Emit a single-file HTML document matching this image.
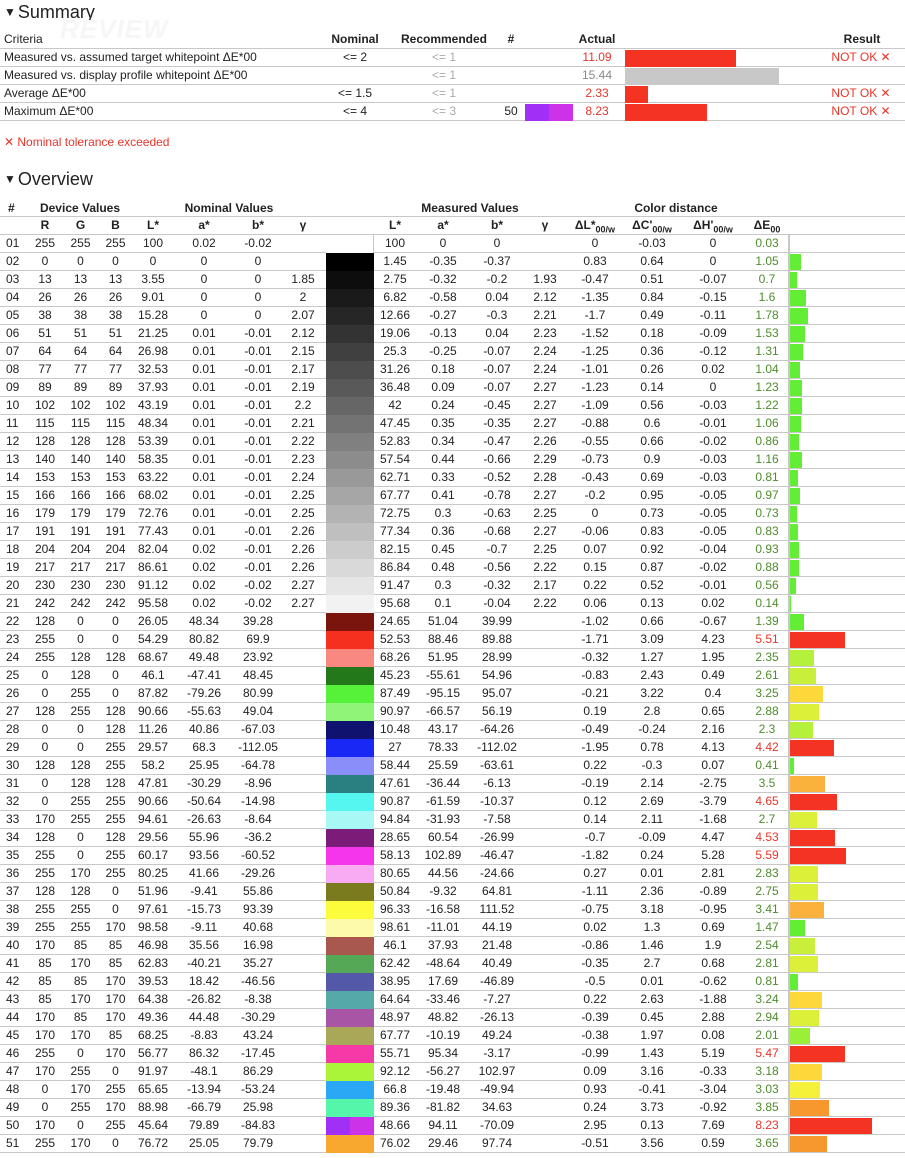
<!DOCTYPE html>
<html><head><meta charset="utf-8"><style>
*{margin:0;padding:0;box-sizing:border-box}
body{width:905px;height:1158px;background:#fff;font-family:"Liberation Sans",Arial,sans-serif;font-size:12px;color:#222;position:relative;overflow:hidden}
.h{position:absolute;left:4px;font-size:18px;color:#222}
.h span{font-size:12px;vertical-align:2px;margin-right:2px}
.a{position:absolute;white-space:nowrap}
.sr{position:absolute;left:0;width:905px;height:18px;border-bottom:1px solid #c8c8c8}
.c{position:absolute;top:0;line-height:17px;text-align:center}
.r{display:flex;height:18px;border-bottom:1px solid #c8c8c8;width:905px}
.r>span{display:block;line-height:17px;text-align:center;white-space:nowrap;flex:none}
.r>span:nth-child(1){width:26px;text-align:left;padding-left:6px}
.r>span:nth-child(2){width:38px}.r>span:nth-child(3){width:33px}.r>span:nth-child(4){width:37px}
.r>span:nth-child(5){width:38px}.r>span:nth-child(6){width:64px}.r>span:nth-child(7){width:44px}
.r>span:nth-child(8){width:46px}.r>span:nth-child(9){width:48px;height:18px;display:flex}
.r>span:nth-child(10){width:42px}.r>span:nth-child(11){width:54px}.r>span:nth-child(12){width:54px}
.r>span:nth-child(13){width:42px}.r>span:nth-child(14){width:58px}.r>span:nth-child(15){width:56px}
.r>span:nth-child(16){width:66px}.r>span:nth-child(17){width:42px;color:#4e8c2c}
.r>span:nth-child(18){width:117px;border-left:2px solid #c8c8c8;height:18px;padding-top:1px;text-align:left}
.r>span:nth-child(9) i{display:block;width:24px;height:18px}
.r>span:nth-child(18) b{display:block;height:16px}
.r>span.red{color:#e8352a}
.hd{font-weight:bold}
sub{font-size:9px;line-height:0}
#tbl{position:absolute;left:0;top:217px}
</style></head><body>
<div class="h" style="top:2px"><span>▼</span>Summary</div>
<div class="a" style="left:60px;top:14px;font-size:26px;font-style:italic;font-weight:bold;color:#f6f6f6;letter-spacing:1px">REVIEW</div>
<div class="sr" style="top:31px"><div class="c" style="left:4px">Criteria</div><div class="c hd" style="left:325px;width:60px">Nominal</div><div class="c hd" style="left:395px;width:98px">Recommended</div><div class="c hd" style="left:501px;width:20px">#</div><div class="c hd" style="left:570px;width:54px">Actual</div><div class="c hd" style="left:830px;width:64px">Result</div></div>
<div class="sr" style="top:49px"><div class="c" style="left:4px">Measured vs. assumed target whitepoint ΔE*00</div><div class="c" style="left:325px;width:60px">&lt;= 2</div><div class="c" style="left:395px;width:98px;color:#aaa">&lt;= 1</div><div class="c" style="left:570px;width:54px;color:#e8352a">11.09</div><div style="position:absolute;left:625px;top:1px;width:111px;height:17px;background:#f53322"></div><div class="c" style="left:826px;width:70px;color:#e8352a">NOT OK ✕</div></div>
<div class="sr" style="top:67px"><div class="c" style="left:4px">Measured vs. display profile whitepoint ΔE*00</div><div class="c" style="left:395px;width:98px;color:#aaa">&lt;= 1</div><div class="c" style="left:570px;width:54px;color:#888">15.44</div><div style="position:absolute;left:625px;top:1px;width:154px;height:17px;background:#c8c8c8"></div></div>
<div class="sr" style="top:85px"><div class="c" style="left:4px">Average ΔE*00</div><div class="c" style="left:325px;width:60px">&lt;= 1.5</div><div class="c" style="left:395px;width:98px;color:#aaa">&lt;= 1</div><div class="c" style="left:570px;width:54px;color:#e8352a">2.33</div><div style="position:absolute;left:625px;top:1px;width:23px;height:17px;background:#f53322"></div><div class="c" style="left:826px;width:70px;color:#e8352a">NOT OK ✕</div></div>
<div class="sr" style="top:103px"><div class="c" style="left:4px">Maximum ΔE*00</div><div class="c" style="left:325px;width:60px">&lt;= 4</div><div class="c" style="left:395px;width:98px;color:#aaa">&lt;= 3</div><div class="c" style="left:500px;width:22px">50</div><div style="position:absolute;left:525px;top:1px;width:24px;height:17px;background:#a030f5"></div><div style="position:absolute;left:549px;top:1px;width:24px;height:17px;background:#cc33e8"></div><div class="c" style="left:570px;width:54px;color:#e8352a">8.23</div><div style="position:absolute;left:625px;top:1px;width:82px;height:17px;background:#f53322"></div><div class="c" style="left:826px;width:70px;color:#e8352a">NOT OK ✕</div></div>
<div class="a" style="left:4px;top:135px;color:#e8352a">✕ Nominal tolerance exceeded</div>
<div class="h" style="top:169px"><span>▼</span>Overview</div>
<div class="sr hd" style="top:200px;height:17px"><div class="c" style="left:8px">#</div><div class="c" style="left:30px;width:100px">Device Values</div><div class="c" style="left:172px;width:114px">Nominal Values</div><div class="c" style="left:416px;width:108px">Measured Values</div><div class="c" style="left:620px;width:112px">Color distance</div></div>
<div id="tbl">
<div class="r hd"><span></span><span>R</span><span>G</span><span>B</span><span>L*</span><span>a*</span><span>b*</span><span>γ</span><span></span><span>L*</span><span>a*</span><span>b*</span><span>γ</span><span>ΔL*<sub>00/w</sub></span><span>ΔC'<sub>00/w</sub></span><span>ΔH'<sub>00/w</sub></span><span style="color:#222">ΔE<sub>00</sub></span><span style="border-left:0"></span></div>
</div>
<script>
var d=`01 255 255 255 100 0.02 -0.02 _ 100 0 0 _ 0 -0.03 0 0.03
02 0 0 0 0 0 0 _ 1.45 -0.35 -0.37 _ 0.83 0.64 0 1.05
03 13 13 13 3.55 0 0 1.85 2.75 -0.32 -0.2 1.93 -0.47 0.51 -0.07 0.7
04 26 26 26 9.01 0 0 2 6.82 -0.58 0.04 2.12 -1.35 0.84 -0.15 1.6
05 38 38 38 15.28 0 0 2.07 12.66 -0.27 -0.3 2.21 -1.7 0.49 -0.11 1.78
06 51 51 51 21.25 0.01 -0.01 2.12 19.06 -0.13 0.04 2.23 -1.52 0.18 -0.09 1.53
07 64 64 64 26.98 0.01 -0.01 2.15 25.3 -0.25 -0.07 2.24 -1.25 0.36 -0.12 1.31
08 77 77 77 32.53 0.01 -0.01 2.17 31.26 0.18 -0.07 2.24 -1.01 0.26 0.02 1.04
09 89 89 89 37.93 0.01 -0.01 2.19 36.48 0.09 -0.07 2.27 -1.23 0.14 0 1.23
10 102 102 102 43.19 0.01 -0.01 2.2 42 0.24 -0.45 2.27 -1.09 0.56 -0.03 1.22
11 115 115 115 48.34 0.01 -0.01 2.21 47.45 0.35 -0.35 2.27 -0.88 0.6 -0.01 1.06
12 128 128 128 53.39 0.01 -0.01 2.22 52.83 0.34 -0.47 2.26 -0.55 0.66 -0.02 0.86
13 140 140 140 58.35 0.01 -0.01 2.23 57.54 0.44 -0.66 2.29 -0.73 0.9 -0.03 1.16
14 153 153 153 63.22 0.01 -0.01 2.24 62.71 0.33 -0.52 2.28 -0.43 0.69 -0.03 0.81
15 166 166 166 68.02 0.01 -0.01 2.25 67.77 0.41 -0.78 2.27 -0.2 0.95 -0.05 0.97
16 179 179 179 72.76 0.01 -0.01 2.25 72.75 0.3 -0.63 2.25 0 0.73 -0.05 0.73
17 191 191 191 77.43 0.01 -0.01 2.26 77.34 0.36 -0.68 2.27 -0.06 0.83 -0.05 0.83
18 204 204 204 82.04 0.02 -0.01 2.26 82.15 0.45 -0.7 2.25 0.07 0.92 -0.04 0.93
19 217 217 217 86.61 0.02 -0.01 2.26 86.84 0.48 -0.56 2.22 0.15 0.87 -0.02 0.88
20 230 230 230 91.12 0.02 -0.02 2.27 91.47 0.3 -0.32 2.17 0.22 0.52 -0.01 0.56
21 242 242 242 95.58 0.02 -0.02 2.27 95.68 0.1 -0.04 2.22 0.06 0.13 0.02 0.14
22 128 0 0 26.05 48.34 39.28 _ 24.65 51.04 39.99 _ -1.02 0.66 -0.67 1.39 #7a150e
23 255 0 0 54.29 80.82 69.9 _ 52.53 88.46 89.88 _ -1.71 3.09 4.23 5.51 #f5301f
24 255 128 128 68.67 49.48 23.92 _ 68.26 51.95 28.99 _ -0.32 1.27 1.95 2.35 #f88880
25 0 128 0 46.1 -47.41 48.45 _ 45.23 -55.61 54.96 _ -0.83 2.43 0.49 2.61 #23781a
26 0 255 0 87.82 -79.26 80.99 _ 87.49 -95.15 95.07 _ -0.21 3.22 0.4 3.25 #56f23a
27 128 255 128 90.66 -55.63 49.04 _ 90.97 -66.57 56.19 _ 0.19 2.8 0.65 2.88 #8ff578
28 0 0 128 11.26 40.86 -67.03 _ 10.48 43.17 -64.26 _ -0.49 -0.24 2.16 2.3 #101270
29 0 0 255 29.57 68.3 -112.05 _ 27 78.33 -112.02 _ -1.95 0.78 4.13 4.42 #1a28f5
30 128 128 255 58.2 25.95 -64.78 _ 58.44 25.59 -63.61 _ 0.22 -0.3 0.07 0.41 #8a8ef8
31 0 128 128 47.81 -30.29 -8.96 _ 47.61 -36.44 -6.13 _ -0.19 2.14 -2.75 3.5 #2a8080
32 0 255 255 90.66 -50.64 -14.98 _ 90.87 -61.59 -10.37 _ 0.12 2.69 -3.79 4.65 #55f5f0
33 170 255 255 94.61 -26.63 -8.64 _ 94.84 -31.93 -7.58 _ 0.14 2.11 -1.68 2.7 #a8f8f5
34 128 0 128 29.56 55.96 -36.2 _ 28.65 60.54 -26.99 _ -0.7 -0.09 4.47 4.53 #7a1c78
35 255 0 255 60.17 93.56 -60.52 _ 58.13 102.89 -46.47 _ -1.82 0.24 5.28 5.59 #f535ea
36 255 170 255 80.25 41.66 -29.26 _ 80.65 44.56 -24.66 _ 0.27 0.01 2.81 2.83 #f8aaf2
37 128 128 0 51.96 -9.41 55.86 _ 50.84 -9.32 64.81 _ -1.11 2.36 -0.89 2.75 #7a7a1f
38 255 255 0 97.61 -15.73 93.39 _ 96.33 -16.58 111.52 _ -0.75 3.18 -0.95 3.41 #fcfc3c
39 255 255 170 98.58 -9.11 40.68 _ 98.61 -11.01 44.19 _ 0.02 1.3 0.69 1.47 #fdfbaa
40 170 85 85 46.98 35.56 16.98 _ 46.1 37.93 21.48 _ -0.86 1.46 1.9 2.54 #a8584f
41 85 170 85 62.83 -40.21 35.27 _ 62.42 -48.64 40.49 _ -0.35 2.7 0.68 2.81 #55a855
42 85 85 170 39.53 18.42 -46.56 _ 38.95 17.69 -46.89 _ -0.5 0.01 -0.62 0.81 #5458a8
43 85 170 170 64.38 -26.82 -8.38 _ 64.64 -33.46 -7.27 _ 0.22 2.63 -1.88 3.24 #55aaa8
44 170 85 170 49.36 44.48 -30.29 _ 48.97 48.82 -26.13 _ -0.39 0.45 2.88 2.94 #a855a5
45 170 170 85 68.25 -8.83 43.24 _ 67.77 -10.19 49.24 _ -0.38 1.97 0.08 2.01 #a8a858
46 255 0 170 56.77 86.32 -17.45 _ 55.71 95.34 -3.17 _ -0.99 1.43 5.19 5.47 #f53aa8
47 170 255 0 91.97 -48.1 86.29 _ 92.12 -56.27 102.97 _ 0.09 3.16 -0.33 3.18 #aaf53a
48 0 170 255 65.65 -13.94 -53.24 _ 66.8 -19.48 -49.94 _ 0.93 -0.41 -3.04 3.03 #2aa8f5
49 0 255 170 88.98 -66.79 25.98 _ 89.36 -81.82 34.63 _ 0.24 3.73 -0.92 3.85 #55f5aa
50 170 0 255 45.64 79.89 -84.83 _ 48.66 94.11 -70.09 _ 2.95 0.13 7.69 8.23 #a030f5 #cc33e8
51 255 170 0 76.72 25.05 79.79 _ 76.02 29.46 97.74 _ -0.51 3.56 0.59 3.65 #f8a82f`;
function bc(e){if(e<2)return'#62ee34';if(e<2.2)return'#9aef38';if(e<2.5)return'#b5f03a';if(e<2.7)return'#c8f03a';if(e<3)return'#dcf03a';if(e<3.1)return'#f5f03a';if(e<3.3)return'#fdd83a';if(e<3.55)return'#fbb23c';if(e<4)return'#f7982e';return'#f53322';}
var h='';d.split('\n').forEach(function(l){var p=l.split(' ');var c1,c2;if(p[16]){c1=p[16];c2=p[17]||p[16];}else{c1=c2='rgb('+p[1]+','+p[1]+','+p[1]+')';}
var e=parseFloat(p[15]);h+='<div class="r">';for(var i=0;i<8;i++)h+='<span>'+(p[i]=='_'?'':p[i])+'</span>';
h+='<span'+(p[0]=='01'?' style="border-right:1px solid #c8c8c8"':'')+'><i style="background:'+c1+'"></i><i style="background:'+c2+'"></i></span>';
for(var i=8;i<15;i++)h+='<span>'+(p[i]=='_'?'':p[i])+'</span>';
h+='<span'+(e>4?' class="red"':'')+'>'+p[15]+'</span><span><b style="width:'+Math.round(e*10)+'px;background:'+bc(e)+'"></b></span></div>';});
document.getElementById('tbl').insertAdjacentHTML('beforeend',h);
</script>
</body></html>
